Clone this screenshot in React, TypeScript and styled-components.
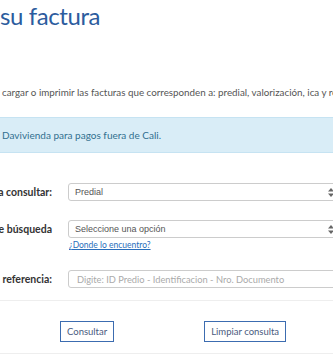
import styled, { createGlobalStyle } from "styled-components";

const GlobalStyle = createGlobalStyle`
  body {
    margin: 0;
    overflow: hidden;
    background: #fff;
    font-family: Lato, "Open Sans", sans-serif;
  }
`;

const StyledPage = styled.main`
  width: 400px;
  display: flex;
  flex-direction: column;
`;

const StyledTitle = styled.h1`
  margin: 1px 0 0 0;
  font-size: 24px;
  line-height: 30px;
  font-weight: 400;
  letter-spacing: -0.4px;
  color: #2c5c9e;
  white-space: nowrap;
`;

const StyledLead = styled.p`
  margin: 52px 0 0 2px;
  font-size: 9.8px;
  line-height: 18px;
  color: #555;
  white-space: nowrap;
`;

const StyledAlert = styled.div`
  margin-top: 16px;
  height: 34px;
  display: flex;
  align-items: center;
  padding-left: 2px;
  background: #d9edf7;
  border-top: 1px solid #c6e3f2;
  border-bottom: 1px solid #c6e3f2;
  color: #31708f;
  font-size: 10px;
  white-space: nowrap;
`;

const StyledForm = styled.form`
  margin-top: 30px;
  display: flex;
  flex-direction: column;
`;

const StyledRow = styled.div<{ $gap: number }>`
  display: grid;
  grid-template-columns: 52px 1fr;
  column-gap: 16px;
  margin-bottom: ${(p) => p.$gap}px;
`;

const StyledLabel = styled.label`
  display: flex;
  justify-content: flex-end;
  align-items: center;
  height: 18px;
  font-size: 10.5px;
  font-weight: 700;
  color: #333;
  white-space: nowrap;
`;

const StyledControl = styled.div`
  display: flex;
  flex-direction: column;
`;

const StyledSelect = styled.div`
  position: relative;
  height: 16px;
  width: 290px;
  border: 1px solid #ccc;
  border-radius: 3px;
  display: flex;
  align-items: center;
  padding-left: 6px;
  font-family: "Liberation Sans", Arial, sans-serif;
  font-size: 9px;
  color: #555;
  white-space: nowrap;
`;

const StyledArrows = styled.svg`
  position: absolute;
  left: 259px;
  top: 4px;
`;

const StyledInput = styled.div`
  height: 16px;
  width: 290px;
  border: 1px solid #ccc;
  border-radius: 3px;
  display: flex;
  align-items: center;
  padding-left: 8px;
  font-size: 9.3px;
  color: #aaa;
  white-space: nowrap;
`;

const StyledLink = styled.a`
  margin-top: 1px;
  padding-left: 1px;
  font-size: 8.5px;
  line-height: 12px;
  color: #2a6ebb;
  text-decoration: underline;
`;

const StyledRule = styled.hr`
  margin: 0;
  border: 0;
  border-top: 1px solid #eee;
`;

const StyledActions = styled.div`
  display: flex;
  gap: 90px;
  padding: 20px 0 11px 60px;
`;

const StyledButton = styled.button`
  height: 21px;
  padding: 0 6px;
  background: #fff;
  border: 1px solid #3c6cb0;
  font-family: inherit;
  font-size: 9.5px;
  color: #4a5a80;
`;

function Arrows() {
  return (
    <StyledArrows width="6" height="9" viewBox="0 0 6 9">
      <path d="M3 0 L6 3.5 L0 3.5 Z" fill="#666" />
      <path d="M3 9 L6 5.5 L0 5.5 Z" fill="#666" />
    </StyledArrows>
  );
}

export default function App() {
  return (
    <StyledPage>
      <GlobalStyle />
      <StyledTitle>su factura</StyledTitle>
      <StyledLead>
        cargar o imprimir las facturas que corresponden a: predial, valorización, ica y reteica
      </StyledLead>
      <StyledAlert>Davivienda para pagos fuera de Cali.</StyledAlert>
      <StyledForm>
        <StyledRow $gap={19}>
          <StyledLabel>Tipo de factura a consultar:</StyledLabel>
          <StyledSelect>
            Predial
            <Arrows />
          </StyledSelect>
        </StyledRow>
        <StyledRow $gap={19}>
          <StyledLabel>Tipo de búsqueda</StyledLabel>
          <StyledControl>
            <StyledSelect>
              Seleccione una opción
              <Arrows />
            </StyledSelect>
            <StyledLink href="#">¿Donde lo encuentro?</StyledLink>
          </StyledControl>
        </StyledRow>
        <StyledRow $gap={12}>
          <StyledLabel>Número de referencia:</StyledLabel>
          <StyledInput>Digite: ID Predio - Identificacion - Nro. Documento</StyledInput>
        </StyledRow>
        <StyledRule />
        <StyledActions>
          <StyledButton type="button">Consultar</StyledButton>
          <StyledButton type="button">Limpiar consulta</StyledButton>
        </StyledActions>
        <StyledRule />
      </StyledForm>
    </StyledPage>
  );
}
